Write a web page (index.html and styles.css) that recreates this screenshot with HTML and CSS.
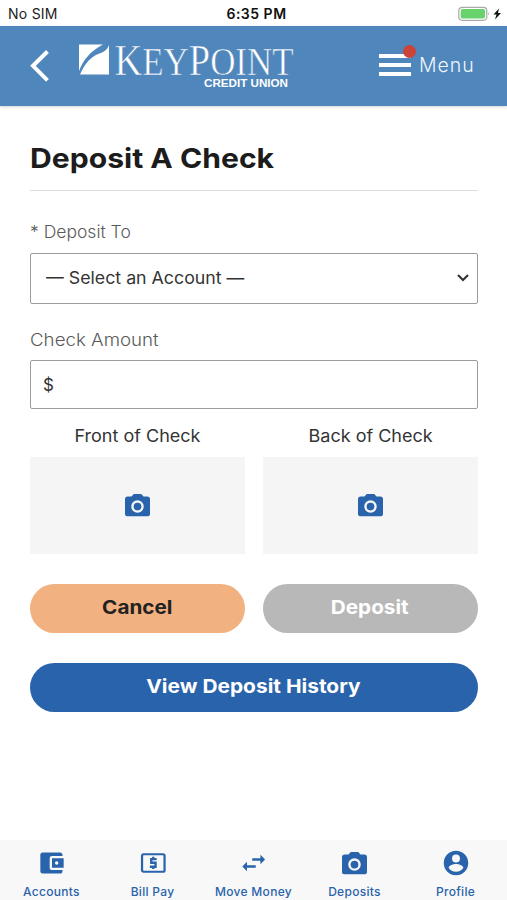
FILE: index.html
```html
<!DOCTYPE html>
<html lang="en">
<head>
<meta charset="utf-8">
<meta name="viewport" content="width=device-width, initial-scale=1">
<title>Deposit A Check</title>
<link rel="stylesheet" href="styles.css">
</head>
<body>
<svg class="defs" width="0" height="0">
  <symbol id="camera" viewBox="2 2 20 18"><path fill-rule="evenodd" d="M9 2 7.200 4H4C2.900 4 2 4.900 2 6v12c0 1.100.9 2 2 2h16c1.100 0 2-.9 2-2V6c0-1.100-.9-2-2-2h-3.200L15 2zM12 7a5 5 0 1 1 0 10 5 5 0 0 1 0-10z"/><circle cx="12" cy="12" r="3.100"/></symbol>
</svg>
<div class="status">
  <span class="carrier">No SIM</span>
  <span class="time">6:35 PM</span>
  <svg class="battery" viewBox="0 0 44 16" width="44" height="16"><rect x=".8" y="1.300" width="28" height="13" rx="3.500" fill="#fff" stroke="#aaa" stroke-width="1.200"/><rect x="2.700" y="3" width="24.300" height="9.600" rx="1.800" fill="#68d36c"/><path d="M30.300 6v3.700q1.600-1.800 0-3.700" fill="#999"/><path d="m41 2.500-5.500 6h3l-1.500 5 6-6.500h-3z" fill="#111"/></svg>
</div>
<header class="header">
  <svg class="back" viewBox="0 0 20 32" width="20" height="32"><path d="M18.500 1.500 4 15.800l14.500 14.500" fill="none" stroke="#fff" stroke-width="4"/></svg>
  <svg class="logo" viewBox="0 0 216 46" width="216" height="46">
    <path d="M0 1.500h24C12 7.500 4 17 0 28z" fill="#fff"/>
    <path d="M30 2v29.500H1C6 20 12 13 23 9.500 27 8 29 5 30 2z" fill="#fff"/>
    <text class="brand" x="35.500" y="31.500" textLength="179" lengthAdjust="spacingAndGlyphs">K<tspan class="small">EY</tspan>P<tspan class="small">OINT</tspan></text>
    <text class="union" x="125" y="43.800" textLength="84" lengthAdjust="spacingAndGlyphs">CREDIT UNION</text>
  </svg>
  <div class="menu">
    <div class="burger"><i></i><i></i><i></i><b class="dot"></b></div>
    <span class="menu-label">Menu</span>
  </div>
</header>
<main class="main">
  <h1 class="title"><span class="wide">Deposit A Check</span></h1>
  <label class="label to"><span class="wide">* Deposit To</span></label>
  <div class="field select"><span class="wide choice">— Select an Account —</span><svg viewBox="0 0 12 8" width="12" height="8"><path d="m1 1 5 5 5-5" fill="none" stroke="#333" stroke-width="2.100"/></svg></div>
  <label class="label amount"><span class="wide">Check Amount</span></label>
  <div class="field money"><span>$</span></div>
  <div class="photos">
    <div class="photo"><span class="wide">Front of Check</span><div class="shot"><svg width="25" height="22.500"><use href="#camera"/></svg></div></div>
    <div class="photo"><span class="wide">Back of Check</span><div class="shot"><svg width="25" height="22.500"><use href="#camera"/></svg></div></div>
  </div>
  <div class="actions">
    <div class="btn cancel"><span class="wide">Cancel</span></div>
    <div class="btn deposit"><span class="wide">Deposit</span></div>
  </div>
  <div class="btn history"><span class="wide">View Deposit History</span></div>
</main>
<nav class="tabs">
  <div class="tab"><svg viewBox="0 0 24 24" width="28" height="28"><path fill-rule="evenodd" d="M21 18v1c0 1.100-.9 2-2 2H4a2 2 0 0 1-2-2V5c0-1.100.9-2 2-2h15c1.100 0 2 .9 2 2v1h-9a2 2 0 0 0-2 2v8c0 1.100.9 2 2 2zm-9-2h10V8H12zM16 10.500a1.500 1.500 0 1 1 0 3 1.500 1.500 0 0 1 0-3z"/></svg><span>Accounts</span></div>
  <div class="tab"><svg viewBox="0 0 24 24" width="28" height="28"><rect x="2.600" y="4.500" width="19.300" height="15" rx="1.300" fill="none" stroke="#2963ab" stroke-width="1.900"/><path d="M15.100 8.700h-4.600v3.100h3.700v3.400H9.300m2.900-8.500v2m0 6v2.400" fill="none" stroke="#2963ab" stroke-width="2"/></svg><span>Bill Pay</span></div>
  <div class="tab"><svg viewBox="0 0 24 24" width="28" height="28"><path d="m21.500 9-4-4v3H10.500v2h7v3zM6 11l-4 4 4 4v-3h7.500v-2H6z"/></svg><span>Move Money</span></div>
  <div class="tab"><svg class="cam" width="25" height="22.500"><use href="#camera"/></svg><span>Deposits</span></div>
  <div class="tab"><svg viewBox="0 0 24 24" width="28" height="28"><path fill-rule="evenodd" d="M12 1.500a10.500 10.500 0 1 0 0 21 10.500 10.500 0 0 0 0-21zM12 4.700a3.400 3.400 0 1 1 0 6.800 3.400 3.400 0 0 1 0-6.800zM12 19.500c-2.700 0-5-1.300-6.300-3.400 0-2.100 4.200-3.300 6.300-3.300s6.300 1.200 6.300 3.300c-1.300 2.100-3.600 3.400-6.300 3.400z"/></svg><span>Profile</span></div>
</nav>
</body>
</html>
```
FILE: styles.css
```css
* { box-sizing: border-box; }
body { margin: 0; width: 507px; height: 900px; overflow: hidden; display: flex; flex-direction: column; background: #fff; font-family: Inter, "Liberation Sans", sans-serif; color: #333; }
svg { display: block; flex: none; }
.defs { position: absolute; }
.wide { display: inline-block; white-space: nowrap; transform: scaleX(1.09); }
.status { height: 26px; flex: none; display: grid; grid-template-columns: 1fr 1fr 1fr; align-items: center; padding: 1px 5px 0 8px; font-size: 14px; color: #222; white-space: nowrap; }
.carrier { letter-spacing: .25px; }
.time { text-align: center; font-weight: 600; letter-spacing: .5px; color: #111; padding-left: 3px; }
.battery { justify-self: end; }
.header { height: 80px; flex: none; background: #4f86bb; display: flex; align-items: center; padding: 0 30px 0 29px; box-shadow: 0 1px 3px rgba(0,0,0,.18); }
.back { margin-right: 30px; }
.logo { overflow: visible; margin-top: -1px; }
.brand { font-family: "Liberation Serif", serif; font-size: 44px; fill: #fff; stroke: #4f86bb; stroke-width: .6px; }
.small { font-size: 40px; }
.union { font-family: "Liberation Sans", sans-serif; font-weight: bold; font-size: 11.500px; fill: #fff; }
.menu { margin-left: 84px; display: flex; align-items: center; gap: 8px; color: #eef5fb; }
.burger { position: relative; width: 32px; height: 22px; margin-top: -3px; display: flex; flex-direction: column; justify-content: space-between; }
.burger i { height: 4px; background: #fff; }
.dot { position: absolute; width: 13px; height: 13px; border-radius: 50%; background: #cb4339; left: 24px; top: -9px; }
.menu-label { font-size: 19.500px; letter-spacing: 1px; margin-top: -3px; font-weight: 300; }
.main { flex: 1; padding: 0 29.500px 0 30px; display: flex; flex-direction: column; }
.title { margin: 0; height: 85px; padding-top: 34px; border-bottom: 1px solid #dedede; font-size: 27.500px; line-height: 36px; font-weight: 700; color: #1c1c1c; }
.title .wide { transform: scaleX(1.095); transform-origin: left; }
.label { color: #5a5a5a; font-size: 17px; line-height: 22px; font-weight: 300; }
.label .wide { transform-origin: left; }
.to { margin-top: 30px; height: 32px; }
.to .wide { transform: scaleX(1.03); }
.field { border: 1px solid #9c9c9c; border-radius: 2px; display: flex; align-items: center; font-size: 17px; }
.select { height: 51px; padding: 0 8px 2px 15px; justify-content: space-between; }
.choice { transform: scaleX(1.045); transform-origin: left; }
.amount { margin-top: 25px; height: 31px; }
.amount .wide { transform: scaleX(1.1); }
.money { height: 49px; padding-left: 12px; }
.photos, .actions { display: grid; grid-template-columns: 1fr 1fr; gap: 18px; }
.photo { text-align: center; font-size: 17px; line-height: 22px; padding-top: 16px; }
.photo .wide { transform: scaleX(1.06); }
.shot { margin-top: 10px; height: 97px; background: #f5f5f5; display: flex; align-items: center; justify-content: center; fill: #2963ab; }
.actions { margin-top: 30px; }
.btn { height: 49px; border-radius: 25px; display: flex; align-items: center; justify-content: center; font-size: 19px; font-weight: 700; padding-bottom: 2px; }
.cancel { background: #f2b180; color: #222; }
.deposit { background: #b8b8b8; color: #fff; }
.history { margin-top: 30px; background: #2963ab; color: #fff; }
.history .wide { transform: scaleX(1.1); }
.tabs { height: 60px; flex: none; background: #f8f8f8; display: grid; grid-template-columns: repeat(5, 101px); padding-left: 1px; }
.tab { display: flex; flex-direction: column; align-items: center; padding-top: 9px; fill: #2963ab; color: #2963ab; font-size: 12px; line-height: 15px; font-weight: 500; letter-spacing: .3px; white-space: nowrap; }
.tab span { margin-top: 7px; }
.cam { margin: 3px 0 2.500px; }
```
